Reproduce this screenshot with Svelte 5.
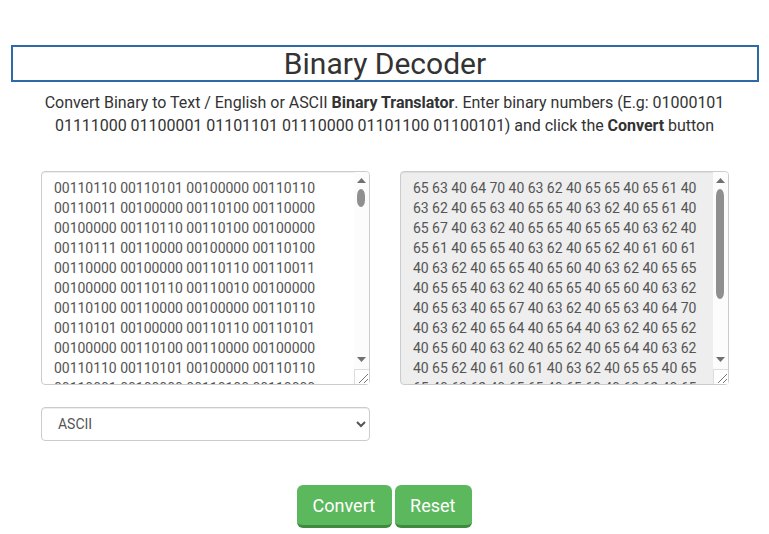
<script>
	const visible = `65 63 40 64 70 40 63 62 40 65 65 40 65 61 40
63 62 40 65 63 40 65 65 40 63 62 40 65 61 40
65 67 40 63 62 40 65 65 40 65 65 40 63 62 40
65 61 40 65 65 40 63 62 40 65 62 40 61 60 61
40 63 62 40 65 65 40 65 60 40 63 62 40 65 65
40 65 65 40 63 62 40 65 65 40 65 60 40 63 62
40 65 63 40 65 67 40 63 62 40 65 63 40 64 70
40 63 62 40 65 64 40 65 64 40 63 62 40 65 62
40 65 60 40 63 62 40 65 62 40 65 64 40 63 62
40 65 62 40 61 60 61 40 63 62 40 65 65 40 65
65 40 63 62 40 65 65 40 65 60 40 63 62 40 65`.replace(/\n/g, ' ')

	// the output box scrolls a little past what is on screen
	let output = visible + ' ' + visible.slice(0, 170)

	// input is the binary form of the output, char by char
	let input = [...output.slice(0, 380)]
		.map((c) => c.charCodeAt(0).toString(2).padStart(8, '0'))
		.join(' ')

	let mode = 'ASCII'
</script>

{#snippet scrollbar(thumb)}
	<div class="bar" aria-hidden="true">
		<svg class="arrow" width="15" height="17" viewBox="0 0 15 17"><path d="M7.5 6l4.5 5H3z" /></svg>
		<div class="track"><div class="thumb" style:height="{thumb}px"></div></div>
		<svg class="arrow" width="15" height="17" viewBox="0 0 15 17"><path d="M7.5 10L12 5H3z" /></svg>
	</div>
{/snippet}

<main class="page">
	<h1 class="title">Binary Decoder</h1>
	<p class="intro">
		Convert Binary to Text / English or ASCII <b>Binary Translator</b>. Enter binary numbers (E.g: 01000101
		01111000 01100001 01101101 01110000 01101100 01100101) and click the <b>Convert</b> button
	</p>

	<div class="fields">
		<div class="column">
			<div class="field">
				<textarea class="control box" value={input}></textarea>
				{@render scrollbar(18)}
			</div>
			<select class="control picker" bind:value={mode}>
				<option>ASCII</option>
				<option>Hex</option>
				<option>Decimal</option>
			</select>
		</div>
		<div class="column">
			<div class="field">
				<textarea class="control box output" readonly value={output}></textarea>
				{@render scrollbar(110)}
			</div>
		</div>
	</div>

	<div class="actions">
		<button class="btn" type="button">Convert</button>
		<button class="btn" type="button">Reset</button>
	</div>
</main>

<style>
	:global(body) {
		background: #fff;
		font-family: Roboto, sans-serif;
		color: #333;
	}

	.page {
		padding: 45px 0 6px;
	}

	.title {
		box-sizing: border-box;
		height: 37px;
		margin: 0 10px 0 11px;
		border: 2px solid #2b6ca8;
		font-size: 30px;
		font-weight: 400;
		line-height: 33px;
		text-align: center;
	}

	.intro {
		margin: 9px 30px 0;
		font-size: 16px;
		line-height: 23px;
		letter-spacing: -0.03px;
		text-align: center;
	}

	.fields {
		display: grid;
		grid-template-columns: 329px 329px;
		gap: 30px;
		margin: 34px 40px 0 41px;
	}

	.column {
		display: flex;
		flex-direction: column;
		gap: 22px;
	}

	.field {
		position: relative;
	}

	.control {
		box-sizing: border-box;
		width: 100%;
		border: 1px solid #ccc;
		border-radius: 4px;
		box-shadow: inset 0 1px 1px rgba(0, 0, 0, 0.075);
		font-family: Roboto, sans-serif;
		font-size: 14px;
		line-height: 20px;
		letter-spacing: -0.03px;
		color: #555;
		background-color: #fff;
	}

	.box {
		display: block;
		height: 214px;
		padding: 6px 27px 6px 12px;
		overflow: hidden;
		resize: both;
	}

	.box::-webkit-resizer {
		border-top: 1px solid #ddd;
		border-left: 1px solid #ddd;
		background: #fff url("data:image/svg+xml,%3Csvg xmlns='http://www.w3.org/2000/svg' width='14' height='14'%3E%3Cpath d='M4 13L13 4M9 13l4-4' stroke='%23777' fill='none'/%3E%3C/svg%3E");
	}

	.output {
		background-color: #eee;
	}

	/* headless chrome draws no native scrollbars, so this one sits over the box */
	.bar {
		position: absolute;
		top: 1px;
		right: 1px;
		bottom: 16px;
		display: flex;
		flex-direction: column;
		width: 15px;
		border-top-right-radius: 3px;
		background: #fcfcfc;
	}

	.arrow {
		display: block;
		flex: none;
		fill: #707070;
	}

	.track {
		flex: 1;
	}

	.thumb {
		width: 8px;
		margin-left: 3px;
		border-radius: 4px / 7px;
		background: #8f8f8f;
	}

	.picker {
		height: 34px;
		padding: 6px 12px;
	}

	.actions {
		display: flex;
		justify-content: center;
		gap: 3px;
		margin-top: 44px;
	}

	.btn {
		box-sizing: border-box;
		height: 43px;
		padding: 1px 16.5px 0 15.5px;
		border: 0;
		border-bottom: 3px solid #3f8a3f;
		border-radius: 6px;
		background: #5cb85c;
		color: #fff;
		font-family: Roboto, sans-serif;
		font-size: 18px;
	}
</style>
